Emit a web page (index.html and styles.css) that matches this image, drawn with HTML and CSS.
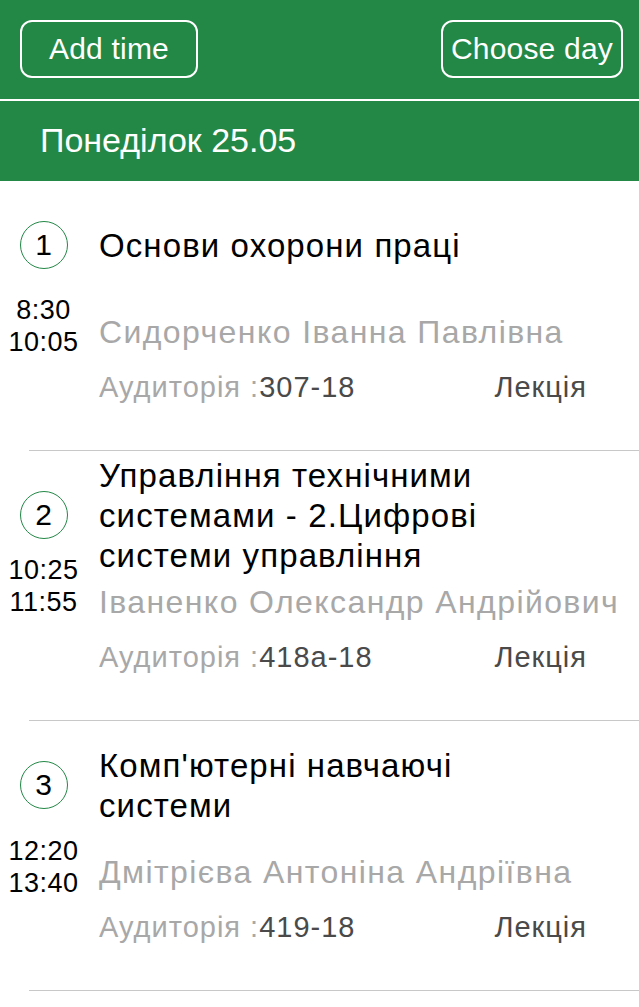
FILE: index.html
```html
<!DOCTYPE html>
<html lang="uk">
<head>
<meta charset="utf-8">
<title>Розклад</title>
<link rel="stylesheet" href="styles.css">
</head>
<body>
<header class="topbar">
  <button class="btn">Add time</button>
  <button class="btn">Choose day</button>
</header>
<div class="daybar">Понеділок 25.05</div>
<ul class="lessons">
  <li class="lesson lines-1">
    <div class="side">
      <span class="num">1</span>
      <div class="time"><span>8:30</span><span>10:05</span></div>
    </div>
    <div class="main">
      <div class="title-box"><h2 class="title">Основи охорони праці</h2></div>
      <p class="teacher">Сидорченко Іванна Павлівна</p>
      <div class="meta"><span class="room"><span class="label">Аудиторія :</span>307-18</span><span class="kind">Лекція</span></div>
    </div>
  </li>
  <li class="lesson lines-3">
    <div class="side">
      <span class="num">2</span>
      <div class="time"><span>10:25</span><span>11:55</span></div>
    </div>
    <div class="main">
      <div class="title-box"><h2 class="title">Управління технічними системами - 2.Цифрові системи управління</h2></div>
      <p class="teacher">Іваненко Олександр Андрійович</p>
      <div class="meta"><span class="room"><span class="label">Аудиторія :</span>418а-18</span><span class="kind">Лекція</span></div>
    </div>
  </li>
  <li class="lesson lines-2">
    <div class="side">
      <span class="num">3</span>
      <div class="time"><span>12:20</span><span>13:40</span></div>
    </div>
    <div class="main">
      <div class="title-box"><h2 class="title">Комп'ютерні навчаючі системи</h2></div>
      <p class="teacher">Дмітрієва Антоніна Андріївна</p>
      <div class="meta"><span class="room"><span class="label">Аудиторія :</span>419-18</span><span class="kind">Лекція</span></div>
    </div>
  </li>
</ul>
</body>
</html>
```

FILE: styles.css
```css
* { box-sizing: border-box; }

html, body {
  margin: 0;
  padding: 0;
  background: #fff;
}

body {
  font-family: "Liberation Sans", Arial, "Helvetica Neue", sans-serif;
  color: #000;
  width: 639px;
}

.topbar {
  height: 101px;
  background: #238846;
  border-bottom: 2px solid #fff;
  display: flex;
  justify-content: space-between;
  align-items: flex-start;
  padding: 20px 16px 0 20px;
}

.btn {
  height: 58px;
  min-width: 178px;
  padding: 0 8px;
  border: 2px solid #fff;
  border-radius: 12px;
  background: transparent;
  color: #fff;
  font-family: inherit;
  font-size: 30px;
  line-height: 1;
  letter-spacing: 0.2px;
}

.daybar {
  height: 80px;
  background: #238846;
  color: #fff;
  font-size: 34px;
  line-height: 79px;
  padding-left: 40px;
}

.lessons {
  list-style: none;
  margin: 0;
  padding: 0;
}

.lesson {
  height: 270px;
  display: grid;
  grid-template-columns: 87px 1fr;
  column-gap: 12px;
  align-items: start;
  background: linear-gradient(#c8c8c8, #c8c8c8) 29px 100% / calc(100% - 29px) 1px no-repeat;
}

.side {
  display: flex;
  flex-direction: column;
  align-items: center;
  padding-top: 40px;
}

.num {
  width: 48px;
  height: 48px;
  border: 1.5px solid #238846;
  border-radius: 50%;
  display: flex;
  align-items: center;
  justify-content: center;
  font-size: 30px;
  line-height: 1;
}

.time {
  display: flex;
  flex-direction: column;
  align-items: center;
  font-size: 27px;
  line-height: 32px;
  letter-spacing: 0.5px;
  margin-top: 25px;
}

.lines-2 .time { margin-top: 26px; }
.lines-3 .time { margin-top: 15px; }

.main {
  padding-top: 5px;
}

.title-box {
  height: 120px;
  display: flex;
  align-items: center;
}

.title {
  margin: 0;
  font-size: 33px;
  font-weight: normal;
  line-height: 40px;
  letter-spacing: 1.1px;
  max-width: 440px;
}

.teacher {
  margin: 9px 0 0;
  font-size: 32px;
  line-height: 34px;
  letter-spacing: 1.4px;
  color: #a8a8a8;
  white-space: nowrap;
}

.meta {
  margin: 21px 52px 0 0;
  display: flex;
  justify-content: space-between;
  font-size: 29px;
  line-height: 34px;
  letter-spacing: 1px;
  color: #4a4a4a;
}

.label {
  color: #a8a8a8;
}
```
